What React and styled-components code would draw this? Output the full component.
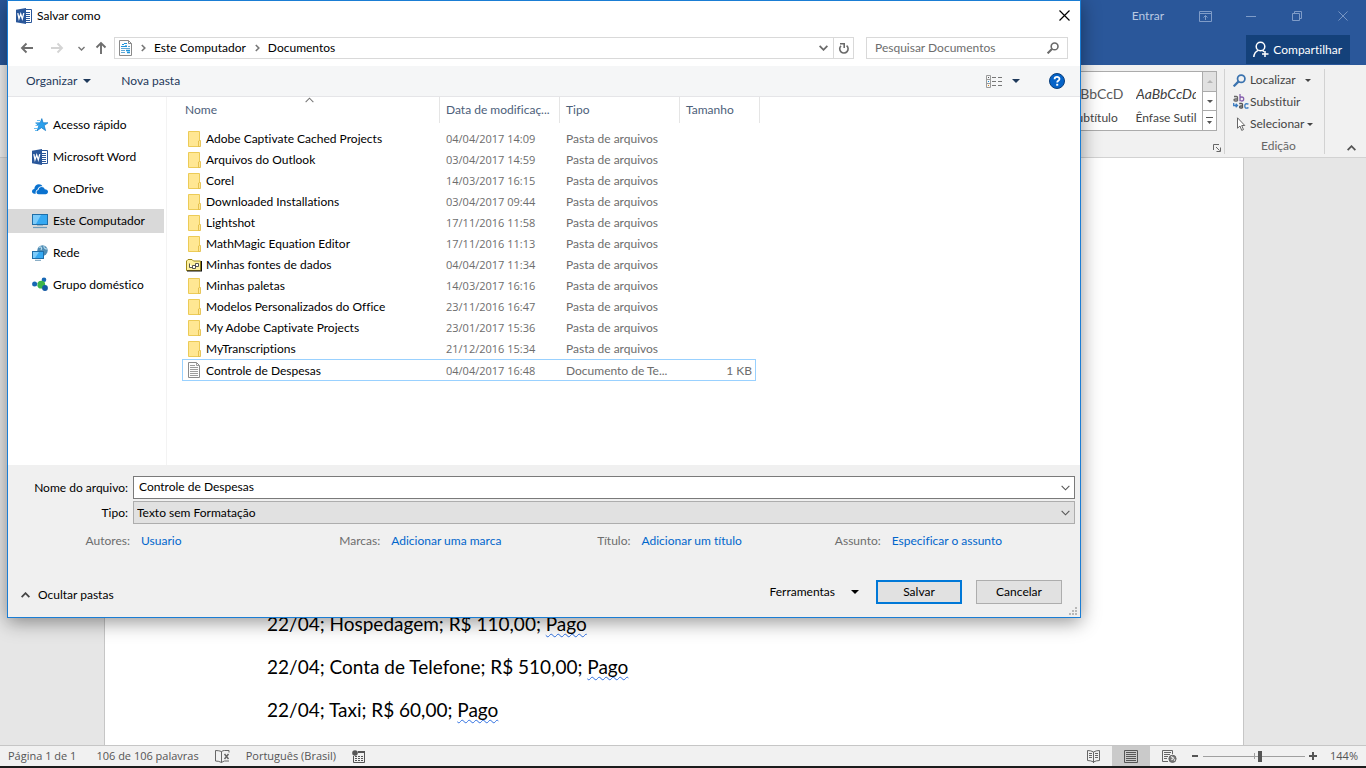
import React from 'react';
import styled, { createGlobalStyle } from 'styled-components';

const UI = `Lato, "Open Sans", sans-serif`;
const NUM = `"Open Sans", "Noto Sans", sans-serif`;

const GlobalStyle = createGlobalStyle`
  *, *::before, *::after { box-sizing: border-box; }
  body { margin: 0; background: #e6e6e6; font: 12px/16px ${UI}; font-variant-ligatures: none; color: #000; }
  button, input, select { font: inherit; font-variant-ligatures: none; color: inherit; margin: 0; padding: 0; border: 0; background: none; border-radius: 0; }
  button { display: inline-flex; align-items: center; cursor: default; white-space: nowrap; }
  a { color: inherit; text-decoration: none; }
  svg { display: block; flex: none; }
`;

/* ---------- Word window ---------- */

const Window = styled.div`
  position: relative;
  display: flex;
  flex-direction: column;
  min-height: 100vh;
  overflow: hidden;
`;

const TitleBar = styled.header`
  display: flex;
  flex-direction: column;
  align-items: flex-end;
  gap: 3px;
  height: 65px;
  background: #2a579a;
  color: #fff;
`;

const WindowControls = styled.div`
  display: flex;
  align-items: center;
  height: 32px;
`;

const SignIn = styled.button`
  padding: 0 18px;
  color: #b9c9e2;
`;

const ControlButton = styled.button`
  justify-content: center;
  width: 46px;
  height: 32px;
  color: #7f9cc8;
`;

const ShareButton = styled.button`
  gap: 4px;
  height: 29px;
  margin-right: 16px;
  padding: 0 8px 0 7px;
  background: #14417a;
`;

const Ribbon = styled.div`
  display: flex;
  justify-content: flex-end;
  height: 93px;
  padding: 4px 10px 3px 0;
  background: #f1f1f1;
  border-bottom: 1px solid #d2d2d2;
  color: #444;
`;

const StylesGroup = styled.section`
  display: flex;
  flex-direction: column;
  align-items: flex-end;
  justify-content: space-between;
  width: 260px;
  padding: 2px 3px 0 0;
`;

const Gallery = styled.div`
  display: flex;
  height: 60px;
  margin-right: 4px;
  border: 1px solid #ababab;
  background: #fff;
`;

const StyleItem = styled.button`
  flex-direction: column;
  justify-content: space-between;
  width: 72px;
  height: 58px;
  padding: 14px 4px 4px;
  color: #444;
`;

const StyleSample = styled.span`
  width: 60px;
  overflow: hidden;
  font: ${(p) => (p.$emphasis ? 'italic 14px/16px' : '14px/16px')} ${UI};
  color: ${(p) => (p.$emphasis ? '#404040' : '#5a5a5a')};
  text-align: left;
`;

const GallerySpinner = styled.div`
  display: grid;
  grid-template-rows: 20px 19px 19px;
  width: 14px;
  border-left: 1px solid #ababab;
`;

const SpinnerButton = styled.button`
  justify-content: center;
  border-bottom: ${(p) => (p.$last ? '0' : '1px solid #ababab')};
  background: ${(p) => (p.$muted ? '#e1e1e1' : '#fff')};
  color: ${(p) => (p.$muted ? '#b5b5b5' : '#555')};
`;

const Launcher = styled.button`
  width: 8px;
  height: 12px;
`;

const EditingGroup = styled.section`
  display: flex;
  flex-direction: column;
  align-items: flex-start;
  width: 101px;
  padding-left: 8px;
  border: solid #d2d2d2;
  border-width: 0 1px;
`;

const RibbonButton = styled.button`
  gap: ${(p) => p.$gap || 3}px;
  height: 23px;
`;

const RibbonIcon = styled.span`
  display: flex;
  width: 14px;
  margin-right: ${(p) => p.$pull || 0}px;
`;

const GroupLabel = styled.div`
  align-self: center;
  margin-top: 3px;
  color: #666;
`;

const CollapseButton = styled.button`
  align-self: flex-end;
  justify-content: flex-end;
  width: 31px;
  height: 12px;
  color: #555;
`;

const Canvas = styled.main`
  display: flex;
  flex: 1;
  padding: 0 122px 0 104px;
  background: #e6e6e6;
`;

const Page = styled.article`
  display: flex;
  flex: 1;
  flex-direction: column;
  justify-content: flex-end;
  padding: 0 162px 14px;
  border: solid #c6c6c6;
  border-width: 0 1px;
  background: #fff;
`;

const Paragraph = styled.p`
  margin: 0;
  font: 19px/43px ${UI};
  white-space: nowrap;
`;

const Flagged = styled.span`
  text-decoration: underline wavy #2f6fe0 1px;
  text-underline-offset: 2px;
  text-decoration-skip-ink: none;
`;

const StatusBar = styled.footer`
  display: flex;
  align-items: center;
  justify-content: space-between;
  height: 23px;
  padding: 0 8px;
  border-top: 1px solid #c6c6c6;
  border-bottom: 2px solid #1c1c1c;
  background: #f1f1f1;
  color: #555;
  font: 11px/16px ${NUM};
`;

const StatusGroup = styled.div`
  display: flex;
  align-items: center;
  gap: ${(p) => p.$gap || 0}px;
`;

const ZoomLevel = styled.span`
  margin-left: 10px;
`;

const ViewButton = styled.button`
  justify-content: center;
  width: 38px;
  height: 20px;
  background: ${(p) => (p.$active ? '#cacaca' : 'none')};
`;

const ZoomSlider = styled.input.attrs({ type: 'range' })`
  appearance: none;
  width: 102px;
  height: 16px;
  background: linear-gradient(#a0a0a0, #a0a0a0) 51px 50% / 1px 6px no-repeat,
    linear-gradient(#a0a0a0, #a0a0a0) 0 50% / 100% 1px no-repeat;
  &::-webkit-slider-thumb { appearance: none; width: 4px; height: 11px; background: #555; }
`;

/* ---------- Save dialog ---------- */

const Dialog = styled.div`
  position: absolute;
  top: 0;
  left: 7px;
  right: 285px;
  display: flex;
  flex-direction: column;
  border: 1px solid #1a7dd4;
  background: #fff;
  box-shadow: 0 4px 18px rgba(0, 0, 0, 0.42);
`;

const DialogTitle = styled.div`
  display: flex;
  align-items: center;
  gap: 5px;
  height: 29px;
  padding: 0 10px 0 8px;
`;

const DialogName = styled.h1`
  flex: 1;
  margin: 0;
  font: inherit;
`;

const NavBar = styled.div`
  display: flex;
  align-items: center;
  height: 36px;
  padding: 0 12px 0 4px;
`;

const NavButton = styled.button`
  justify-content: center;
  width: ${(p) => p.$w}px;
  height: 20px;
`;

const AddressBar = styled.div`
  display: flex;
  flex: 1;
  align-items: center;
  height: 22px;
  margin: 0 12px 0 2px;
  padding-left: 4px;
  border: 1px solid #d9d9d9;
`;

const Crumb = styled.button`
  padding: 0 8px 0 9px;
`;

const AddressTools = styled.div`
  display: flex;
  margin-left: auto;
  align-self: stretch;
`;

const AddressButton = styled.button`
  justify-content: center;
  width: 20px;
  border-left: ${(p) => (p.$divided ? '1px solid #d9d9d9' : '0')};
`;

const SearchBox = styled.label`
  display: flex;
  align-items: center;
  width: 202px;
  height: 22px;
  padding: 0 8px;
  border: 1px solid #d9d9d9;
`;

const SearchInput = styled.input`
  flex: 1;
  min-width: 0;
  outline: 0;
  &::placeholder { color: #6d6d6d; opacity: 1; }
`;

const Toolbar = styled.div`
  display: flex;
  align-items: center;
  height: 31px;
  padding: 0 15px 0 18px;
  border-bottom: 1px solid #e5e5e8;
  background: #f5f6f7;
  color: #1e395b;
`;

const ToolButton = styled.button`
  gap: 6px;
  margin-right: 30px;
`;

const ViewTools = styled.div`
  display: flex;
  align-items: center;
  gap: 9px;
  margin-left: auto;
`;

const HelpButton = styled.button`
  margin-left: 20px;
`;

const Body = styled.div`
  display: flex;
  height: 368px;
`;

const Sidebar = styled.nav`
  display: flex;
  flex: none;
  flex-direction: column;
  gap: 8px;
  width: 159px;
  padding: 16px 2px 0 0;
  border-right: 1px solid #f3f3f3;
`;

const Place = styled.a`
  display: flex;
  align-items: center;
  gap: 5px;
  height: 24px;
  padding-left: 24px;
  background: ${(p) => (p.$selected ? '#d9d9d9' : 'none')};
`;

const Files = styled.div`
  flex: 1;
  padding-left: 15px;
`;

const FileTable = styled.table`
  width: 574px;
  table-layout: fixed;
  border-collapse: separate;
  border-spacing: 0;
  color: #6d6d6d;
`;

const HeadCell = styled.th`
  position: relative;
  width: ${(p) => p.$w}px;
  height: 26px;
  padding: 0 0 0 ${(p) => (p.$first ? 3 : 6)}px;
  color: #4c607a;
  font-weight: 400;
  text-align: left;
  white-space: nowrap;
  &::after {
    content: '';
    position: absolute;
    top: 0;
    right: ${(p) => (p.$outer ? -4 : 0)}px;
    width: 1px;
    height: 26px;
    background: #e5e5e5;
  }
`;

const SortMark = styled.span`
  position: absolute;
  top: 0;
  left: 123px;
`;

const Spacer = styled.tr`
  height: 5px;
`;

const FileRow = styled.tr`
  height: ${(p) => (p.$selected ? 22 : 21)}px;
  td { border: solid ${(p) => (p.$selected ? '#99d1ff' : 'transparent')}; border-width: 1px 0; }
  td:first-child { border-left-width: 1px; }
  td:last-child { border-right-width: 1px; }
`;

const Cell = styled.td`
  padding: 0 3px 0 6px;
  overflow: hidden;
  line-height: 19px;
  text-align: ${(p) => (p.$right ? 'right' : 'left')};
  text-overflow: ellipsis;
  white-space: nowrap;
`;

const DateCell = styled(Cell)`
  font: 11px/19px ${NUM};
`;

const NameCell = styled(Cell)`
  padding-left: 3px;
  color: #000;
`;

const FileName = styled.span`
  display: flex;
  align-items: center;
  gap: 4px;
`;

const Footer = styled.div`
  position: relative;
  display: flex;
  flex-direction: column;
  height: 152px;
  padding-top: 11px;
  background: #f0f0f0;
`;

const FieldRow = styled.div`
  display: flex;
  align-items: center;
  gap: 5px;
  height: 23px;
  margin-bottom: 2px;
  padding-right: 5px;
`;

const FieldLabel = styled.label`
  width: 120px;
  text-align: right;
`;

const Combo = styled.div`
  position: relative;
  display: flex;
  flex: 1;
  align-items: center;
  height: 23px;
  border: 1px solid ${(p) => (p.$muted ? '#adadad' : '#7a7a7a')};
  background: ${(p) => (p.$muted ? '#e1e1e1' : '#fff')};
`;

const ComboInput = styled.input`
  flex: 1;
  height: 21px;
  padding: 0 0 2px 5px;
  outline: 0;
`;

const ComboSelect = styled.select`
  appearance: none;
  flex: 1;
  height: 21px;
  padding-left: 3px;
  outline: 0;
`;

const ComboArrow = styled.span`
  position: absolute;
  right: 4px;
  pointer-events: none;
`;

const Metadata = styled.dl`
  display: grid;
  grid-template-columns: repeat(4, 1fr);
  margin: 7px 71px 0 0;
`;

const MetaItem = styled.div`
  display: flex;
  gap: 11px;
`;

const MetaLabel = styled.dt`
  width: 122px;
  color: #6d6d6d;
  text-align: right;
`;

const MetaValue = styled.dd`
  margin: 0;
  color: #0066cc;
  white-space: nowrap;
`;

const Actions = styled.div`
  display: flex;
  align-items: center;
  justify-content: space-between;
  margin-top: 31px;
  padding: 0 18px 0 13px;
`;

const FoldersButton = styled.button`
  gap: 8px;
  padding-top: 6px;
`;

const ActionGroup = styled.div`
  display: flex;
  align-items: center;
  gap: 14px;
`;

const ToolsButton = styled.button`
  gap: 16px;
  margin-right: 3px;
`;

const PushButton = styled.button`
  justify-content: center;
  width: 86px;
  height: 24px;
  border: ${(p) => (p.$primary ? '2px solid #0078d7' : '1px solid #adadad')};
  background: #e1e1e1;
`;

const Grip = styled.span`
  position: absolute;
  right: 3px;
  bottom: 2px;
`;

/* ---------- Icons ---------- */

const Arrow = ({ w = 8, h = 4, up }) => (
  <svg width={w} height={h} viewBox="0 0 8 4" fill="currentColor">
    <path d={up ? 'M0 4 4 0l4 4z' : 'M0 0h8L4 4z'} />
  </svg>
);

const Chevron = ({ w = 10, h = 6, color = '#555', sw = 1.2, up }) => (
  <svg width={w} height={h} viewBox="0 0 10 6" fill="none" stroke={color} strokeWidth={sw}>
    <path d={up ? 'M.7 5.3 5 1l4.3 4.3' : 'M.7.7 5 5 9.3.7'} />
  </svg>
);

const CrumbMark = () => (
  <svg width="5" height="8" viewBox="0 0 5 8" fill="none" stroke="#777" strokeWidth="1.6">
    <path d="M.8 1 3.8 4l-3 3" />
  </svg>
);

const WordIcon = () => (
  <svg width="16" height="16" viewBox="0 0 16 16">
    <path d="M9 1.5h6.5v13H9z" fill="#fff" stroke="#2a579a" />
    <path d="M10 4.5h4M10 6.5h4M10 8.5h4M10 10.5h4M10 12.5h4" stroke="#2a579a" />
    <path d="M0 1.8 10 0v16L0 14.2z" fill="#2a579a" />
    <path d="m1.8 5.2 1.2 5.5L4.7 6l1.6 4.7 1.5-5.5" fill="none" stroke="#fff" strokeWidth="1.3" />
  </svg>
);

const NavArrow = ({ color, d }) => (
  <svg width="14" height="14" viewBox="0 0 14 14" fill="none" stroke={color} strokeWidth="1.9">
    <path d={d} />
  </svg>
);

const DocumentsIcon = () => (
  <svg width="13" height="16" viewBox="0 0 13 16" fill="none">
    <path d="M.5.5h9l3 3v12H.5z" fill="#fdfdfd" stroke="#8a8a8a" />
    <path d="M9.5.5v3h3" stroke="#8a8a8a" />
    <path d="M5 3.500h3M3 4.500h2M2 6.500h6M7 5v2" stroke="#1a93dc" strokeWidth="1.2" />
    <path d="M2 8.500h9M2 10.500h4M2 12.500h4M9 6.500h2" stroke="#5fa8d6" />
    <path d="M7 10.500h4M8 12.500h3" stroke="#1a93dc" strokeWidth="1.4" />
  </svg>
);

const RefreshIcon = () => (
  <svg width="12" height="13" viewBox="0 0 12 13" fill="none" stroke="#6a6a6a" strokeWidth="1.6">
    <path d="M8.600 3.600A4.200 4.200 0 1 1 3 3.800" />
    <path d="M2 1.800h4.200V6" />
  </svg>
);

const SearchIcon = ({ size = 12, color = '#6a6a6a', sw = 1.6 }) => (
  <svg width={size} height={size} viewBox="0 0 12 12" fill="none" stroke={color} strokeWidth={sw}>
    <circle cx="7.6" cy="4.4" r="3.4" />
    <path d="M5.2 6.8.6 11.4" strokeWidth={sw * 1.3} />
  </svg>
);

const DetailsIcon = () => (
  <svg width="17" height="13" viewBox="0 0 17 13" fill="none">
    <path d="M.5.5h4v12h-4zM.5 4.5h4M.5 8.5h4" stroke="#9a9a9a" />
    <path d="M2 2.5h1" stroke="#555" />
    <path d="M2 6.5h1" stroke="#1a93dc" />
    <path d="M2 10.5h1" stroke="#d98a1c" />
    <path d="M6 2.5h4M12 2.5h4M6 6.5h4M12 6.5h4M6 10.5h4M12 10.5h4" stroke="#777" />
  </svg>
);

const HelpIcon = () => (
  <svg width="16" height="16" viewBox="0 0 16 16" fill="none">
    <circle cx="8" cy="8" r="7.5" fill="#0563c8" stroke="#0a3f7c" />
    <path d="M5.6 6.2c0-3 4.9-3 4.9-.2 0 1.8-2.3 1.8-2.3 3.4" stroke="#fff" strokeWidth="1.8" />
    <path d="M7.2 10.8h2v1.9h-2z" fill="#fff" />
  </svg>
);

const StarIcon = () => (
  <svg width="16" height="16" viewBox="0 0 16 16">
    <path d="m9.8 1.6 1.3 4.2H16l-3.8 2.8 1.4 5-4.2-2.9L5 13.8l1.8-4.9L3.8 6l4.4-.2z" fill="#2ba0ec" stroke="#1377c4" strokeWidth=".7" />
    <path d="M5 3.5h3M3.5 6h3M3.5 8.5h3M2 11.5h4M3 13.5h2" stroke="#68bdf2" />
  </svg>
);

const CloudIcon = () => (
  <svg width="16" height="16" viewBox="0 0 16 16" fill="#0a72cf">
    <path d="M3.7 12.7H2.6C.9 12.7 0 11.6 0 10.4c0-1.3 1-2.3 2.3-2.4C2.4 5 4.5 3.3 6.9 3.3c1.7 0 3 .8 3.7 2.1-2.7-.6-4.6.9-5 3.1-1.500.5-2.3 2.3-1.900 4.200z" />
    <path d="M6.6 13.2c-1.3 0-2.1-.9-2.1-2s.9-2 2-2.1c.1-1.8 1.5-3 3.2-3 1.5 0 2.6.8 3 2.1 2 0 3.3 1 3.3 2.6s-1.1 2.4-2.4 2.400z" />
  </svg>
);

const Screen = ({ x = 0, y = 0, w = 16, h = 11 }) => (
  <g>
    <rect x={x + 0.5} y={y + 0.5} width={w - 1} height={h - 1} fill="#36a9f2" stroke="#1f6ea8" />
    <path d={`M${x + 1} ${y + 1}h${w / 2}L${x + w / 4} ${y + h - 1}H${x + 1}z`} fill="#7ccbfa" />
  </g>
);

const ComputerIcon = () => (
  <svg width="16" height="16" viewBox="0 0 16 16">
    <Screen y={1} />
    <path d="M5 12.5h6" stroke="#9fb6c6" />
    <path d="M1 14.5h14" stroke="#6f9cba" strokeWidth="1.2" />
  </svg>
);

const NetworkIcon = () => (
  <svg width="16" height="16" viewBox="0 0 16 16">
    <circle cx="10.5" cy="5.5" r="5.2" fill="#4f8cb4" />
    <path d="M7 2.500c2-1.500 3.500.5 2 2.500M12 1c-.5 2 1.500 3 3 3" stroke="#b9dcee" strokeWidth="1.2" fill="none" />
    <Screen y={6} w={12} h={8} />
    <path d="M3 15.3h6" stroke="#6f9cba" />
  </svg>
);

const HomegroupIcon = () => (
  <svg width="16" height="16" viewBox="0 0 16 16">
    <path d="M3 7.5 12 3v9z" fill="none" stroke="#a8cbe4" />
    <circle cx="2.6" cy="7" r="2.5" fill="#1767b4" />
    <circle cx="12" cy="2.8" r="2.3" fill="#1767b4" />
    <circle cx="9.3" cy="7.7" r="3.9" fill="#3cb54a" />
    <circle cx="13" cy="11" r="2.9" fill="#1459a3" />
  </svg>
);

const FolderIcon = () => (
  <svg width="16" height="16" viewBox="0 0 16 16">
    <path d="M2.5.5h11v15h-11z" fill="#ffe793" stroke="#eccb57" />
    <path d="M12.5 10v5.500h2V9.500h-1z" fill="#ffe793" stroke="#dfb93f" strokeWidth=".8" />
  </svg>
);

const DataFolderIcon = () => (
  <svg width="16" height="16" viewBox="0 0 16 16">
    <path d="M.5 13.5V4l1.500-1.500h4L7.500 4h7v9.500z" fill="#fdf0a0" stroke="#a08a14" />
    <path d="M1 14h14.5V4" fill="none" stroke="#111" strokeWidth="1.2" />
    <path d="M3.500 6.500v4h3M6.500 8.500h3v3h-3zM9.500 6.500h3v3h-3z" fill="#fff" stroke="#444" strokeWidth=".9" />
  </svg>
);

const TextFileIcon = () => (
  <svg width="16" height="16" viewBox="0 0 16 16">
    <path d="M2.5.5h8l3 3v12h-11z" fill="#fdfdfd" stroke="#8a8a8a" />
    <path d="M10.5.5v3h3M4 3.5h5M4 5.5h8M4 7.5h8M4 9.5h8M4 11.5h8M4 13.5h8" fill="none" stroke="#9c9c9c" />
  </svg>
);

const CloseIcon = ({ size = 11, sw = 1.2 }) => (
  <svg width={size} height={size} viewBox="0 0 11 11" stroke="currentColor" strokeWidth={sw}>
    <path d="m.5.5 10 10M10.5.5l-10 10" />
  </svg>
);

const RibbonOptionsIcon = () => (
  <svg width="13" height="11" viewBox="0 0 13 11" fill="none" stroke="currentColor">
    <path d="M.5.5h12v10H.5zM.5 2.5h12M6.5 9V4.5M4.5 6.5l2-2 2 2" />
  </svg>
);

const PersonIcon = () => (
  <svg width="16" height="17" viewBox="0 0 16 17" fill="none" stroke="#fff" strokeWidth="1.5">
    <circle cx="7.5" cy="5.5" r="4.3" />
    <path d="M.8 16c.3-3.5 2-5.500 4.400-6.600M9.500 9.400l1.500 1.200M12 10v6M9 13h6.500" />
  </svg>
);

const ReplaceIcon = () => (
  <svg width="16" height="16" viewBox="0 0 16 16" fill="none" strokeWidth="1.3">
    <path d="M1 2.5h2.5q1 0 1 1V7M4.5 5H2.300Q1 5 1 6t1.300 1H4.500" stroke="#666" />
    <path d="M7 0v7.300M7 4.500q0-1.500 1.800-1.500 1.900 0 1.900 2t-1.900 2Q7 7 7 5.500" stroke="#8661ae" />
    <path d="M6.200 9.500h2.300q1 0 1 1V14M9.500 12H7.800q-1.300 0-1.300 1t1.300 1H9.500" stroke="#555" />
    <path d="M15.500 10.200q-3.700-1.500-3.700 1.800t3.700 1.700" stroke="#3b7bbf" />
    <path d="M.7 9v2.500h3.500M2.700 9.800l1.800 1.700-1.800 1.800" stroke="#3b7bbf" />
  </svg>
);

const CursorIcon = () => (
  <svg width="14" height="14" viewBox="0 0 14 14" fill="#fff" stroke="#666">
    <path d="M4.5.8v10.400L7 9l1.700 4.400 1.800-.8L8.700 8.500h3.100z" />
  </svg>
);

const LauncherIcon = () => (
  <svg width="8" height="8" viewBox="0 0 8 8" fill="none" stroke="#666">
    <path d="M.5 6V.5H6M3 3l3.5 3.5M7.5 3.5v4h-4" />
  </svg>
);

const ProofIcon = () => (
  <svg width="15" height="13" viewBox="0 0 15 13" fill="none" stroke="#666">
    <path d="M6.500 12.500v-11M6.500 1.500q-2.500-1-6-1v10.500q3.500 0 6 1.500 1.500-1 3-1.500h4.500M6.500 1.500q1.500-1 3-1h4.500v2" />
    <path d="m9.500 4 4 5M13.500 4l-4 5" strokeWidth="1.500" />
  </svg>
);

const MacroIcon = () => (
  <svg width="14" height="13" viewBox="0 0 14 13" fill="none" stroke="#555">
    <path d="M1.5 6v6.500h11V2" />
    <path d="M6 2h7" strokeWidth="2" />
    <path d="M3 6.500h2M6 6.500h2M9 6.500h2M3 8.500h2M6 8.500h2M9 8.500h2M3 10.500h2M6 10.500h2M9 10.500h2" />
    <circle cx="3" cy="3" r="2.8" fill="#555" stroke="none" />
  </svg>
);

const ReadIcon = () => (
  <svg width="13" height="13" viewBox="0 0 13 13" fill="none" stroke="#666">
    <path d="M6.5 2Q4 .5.5.5v10q3.5 0 6 1.5 2.5-1.5 6-1.5V.5Q9 .5 6.5 2zV13" />
    <path d="M2 3.5h3M2 5.5h3M2 7.5h3M8 3.5h3M8 5.5h3M8 7.5h3" />
  </svg>
);

const PrintIcon = () => (
  <svg width="14" height="13" viewBox="0 0 14 13" fill="none" stroke="#555">
    <path d="M.5.5h13v12H.5zM2 2.5h10M2 4.5h10M2 6.5h10M2 8.5h10M2 10.5h10" />
  </svg>
);

const WebIcon = () => (
  <svg width="15" height="13" viewBox="0 0 15 13" fill="none" stroke="#666">
    <path d="M6 11.5H.5V.5h10V4M2 2.5h7M2 4.5h6M2 6.5h4M2 8.5h3" />
    <circle cx="10.5" cy="8.8" r="3.6" fill="#777" />
    <path d="M9 6.500 11.500 8 9.500 10M12 10.500l1-1" stroke="#eee" strokeWidth="1.2" />
  </svg>
);

const ZoomMark = ({ plus }) => (
  <svg width="8" height="8" viewBox="0 0 8 8" stroke="#555" strokeWidth="2">
    <path d={plus ? 'M0 4h8M4 0v8' : 'M1 4h6'} />
  </svg>
);

const GripIcon = () => (
  <svg width="8" height="8" viewBox="0 0 8 8" fill="#b8b8b8">
    <path d="M6 0h2v2H6zM3 3h2v2H3zM6 3h2v2H6zM0 6h2v2H0zM3 6h2v2H3zM6 6h2v2H6z" />
  </svg>
);

/* ---------- Data ---------- */

const places = [
  ['Acesso rápido', StarIcon],
  ['Microsoft Word', WordIcon],
  ['OneDrive', CloudIcon],
  ['Este Computador', ComputerIcon],
  ['Rede', NetworkIcon],
  ['Grupo doméstico', HomegroupIcon],
];

const FOLDER = 'Pasta de arquivos';
const files = [
  ['Adobe Captivate Cached Projects', '04/04/2017 14:09', FOLDER, '', FolderIcon],
  ['Arquivos do Outlook', '03/04/2017 14:59', FOLDER, '', FolderIcon],
  ['Corel', '14/03/2017 16:15', FOLDER, '', FolderIcon],
  ['Downloaded Installations', '03/04/2017 09:44', FOLDER, '', FolderIcon],
  ['Lightshot', '17/11/2016 11:58', FOLDER, '', FolderIcon],
  ['MathMagic Equation Editor', '17/11/2016 11:13', FOLDER, '', FolderIcon],
  ['Minhas fontes de dados', '04/04/2017 11:34', FOLDER, '', DataFolderIcon],
  ['Minhas paletas', '14/03/2017 16:16', FOLDER, '', FolderIcon],
  ['Modelos Personalizados do Office', '23/11/2016 16:47', FOLDER, '', FolderIcon],
  ['My Adobe Captivate Projects', '23/01/2017 15:36', FOLDER, '', FolderIcon],
  ['MyTranscriptions', '21/12/2016 15:34', FOLDER, '', FolderIcon],
  ['Controle de Despesas', '04/04/2017 16:48', 'Documento de Te...', '1 KB', TextFileIcon],
];

const metadata = [
  ['Autores:', 'Usuario'],
  ['Marcas:', 'Adicionar uma marca'],
  ['Título:', 'Adicionar um título'],
  ['Assunto:', 'Especificar o assunto'],
];

const paragraphs = [
  '22/04; Hospedagem; R$ 110,00; ',
  '22/04; Conta de Telefone; R$ 510,00; ',
  '22/04; Taxi; R$ 60,00; ',
];

/* ---------- Views ---------- */

const SaveDialog = () => (
  <Dialog role="dialog" aria-labelledby="dialog-name">
    <DialogTitle>
      <WordIcon />
      <DialogName id="dialog-name">Salvar como</DialogName>
      <button aria-label="Fechar"><CloseIcon /></button>
    </DialogTitle>
    <NavBar>
      <NavButton $w={30} aria-label="Voltar"><NavArrow color="#6e6e6e" d="M13 7H2M6.5 2.500 2 7l4.500 4.500" /></NavButton>
      <NavButton $w={30} aria-label="Avançar"><NavArrow color="#d4d4d4" d="M1 7h11M7.500 2.500 12 7l-4.500 4.500" /></NavButton>
      <NavButton $w={18} aria-label="Locais recentes"><Chevron w={7} h={5} color="#777" sw={2} /></NavButton>
      <NavButton $w={22} aria-label="Acima"><NavArrow color="#6e6e6e" d="M7 13V2M2.500 6.500 7 2l4.500 4.500" /></NavButton>
      <AddressBar>
        <DocumentsIcon />
        <Crumb aria-label="Raiz"><CrumbMark /></Crumb>
        <button>Este Computador</button>
        <Crumb aria-label="Subpastas"><CrumbMark /></Crumb>
        <button>Documentos</button>
        <AddressTools>
          <AddressButton aria-label="Locais anteriores"><Chevron w={9} h={6} color="#6a6a6a" sw={2} /></AddressButton>
          <AddressButton $divided aria-label="Atualizar"><RefreshIcon /></AddressButton>
        </AddressTools>
      </AddressBar>
      <SearchBox>
        <SearchInput placeholder="Pesquisar Documentos" aria-label="Pesquisar Documentos" />
        <SearchIcon />
      </SearchBox>
    </NavBar>
    <Toolbar>
      <ToolButton>Organizar <Arrow /></ToolButton>
      <ToolButton>Nova pasta</ToolButton>
      <ViewTools>
        <button aria-label="Exibição"><DetailsIcon /></button>
        <button aria-label="Mais opções"><Arrow /></button>
        <HelpButton aria-label="Ajuda"><HelpIcon /></HelpButton>
      </ViewTools>
    </Toolbar>
    <Body>
      <Sidebar>
        {places.map(([label, Icon]) => (
          <Place key={label} href="#" $selected={label === 'Este Computador'}>
            <Icon />
            {label}
          </Place>
        ))}
      </Sidebar>
      <Files>
        <FileTable>
          <thead>
            <tr>
              <HeadCell $w={258} $first>
                Nome
                <SortMark><Chevron up w={9} h={6} color="#777" /></SortMark>
              </HeadCell>
              <HeadCell $w={120}>Data de modificaç...</HeadCell>
              <HeadCell $w={120}>Tipo</HeadCell>
              <HeadCell $w={76} $outer>Tamanho</HeadCell>
            </tr>
          </thead>
          <tbody>
            <Spacer />
            {files.map(([name, date, type, size, Icon]) => (
              <FileRow key={name} $selected={size !== ''}>
                <NameCell><FileName><Icon />{name}</FileName></NameCell>
                <DateCell>{date}</DateCell>
                <Cell>{type}</Cell>
                <Cell $right>{size}</Cell>
              </FileRow>
            ))}
          </tbody>
        </FileTable>
      </Files>
    </Body>
    <Footer>
      <FieldRow>
        <FieldLabel htmlFor="file-name">Nome do arquivo:</FieldLabel>
        <Combo>
          <ComboInput id="file-name" defaultValue="Controle de Despesas" />
          <ComboArrow><Chevron w={9} /></ComboArrow>
        </Combo>
      </FieldRow>
      <FieldRow>
        <FieldLabel htmlFor="file-type">Tipo:</FieldLabel>
        <Combo $muted>
          <ComboSelect id="file-type"><option>Texto sem Formatação</option></ComboSelect>
          <ComboArrow><Chevron w={9} /></ComboArrow>
        </Combo>
      </FieldRow>
      <Metadata>
        {metadata.map(([label, value]) => (
          <MetaItem key={label}>
            <MetaLabel>{label}</MetaLabel>
            <MetaValue><a href="#">{value}</a></MetaValue>
          </MetaItem>
        ))}
      </Metadata>
      <Actions>
        <FoldersButton><Chevron up w={9} color="#444" sw={2} />Ocultar pastas</FoldersButton>
        <ActionGroup>
          <ToolsButton>Ferramentas <Arrow /></ToolsButton>
          <PushButton $primary>Salvar</PushButton>
          <PushButton>Cancelar</PushButton>
        </ActionGroup>
      </Actions>
      <Grip><GripIcon /></Grip>
    </Footer>
  </Dialog>
);

export default function App() {
  return (
    <Window>
      <GlobalStyle />
      <TitleBar>
        <WindowControls>
          <SignIn>Entrar</SignIn>
          <ControlButton aria-label="Opções da Faixa de Opções"><RibbonOptionsIcon /></ControlButton>
          <ControlButton aria-label="Minimizar">
            <svg width="10" height="1"><path d="M0 .5h10" stroke="currentColor" /></svg>
          </ControlButton>
          <ControlButton aria-label="Restaurar">
            <svg width="10" height="10" viewBox="0 0 10 10" fill="none" stroke="currentColor">
              <path d="M.5 2.5h7v7h-7zM2.5 2.500v-2h7v7h-2" />
            </svg>
          </ControlButton>
          <ControlButton aria-label="Fechar Word"><CloseIcon size={10} sw={1} /></ControlButton>
        </WindowControls>
        <ShareButton><PersonIcon />Compartilhar</ShareButton>
      </TitleBar>
      <Ribbon>
        <StylesGroup>
          <Gallery>
            <StyleItem><StyleSample>AaBbCcD</StyleSample>Subtítulo</StyleItem>
            <StyleItem><StyleSample $emphasis>AaBbCcDd</StyleSample>Ênfase Sutil</StyleItem>
            <GallerySpinner>
              <SpinnerButton $muted aria-label="Linha anterior"><Arrow w={6} h={3} up /></SpinnerButton>
              <SpinnerButton aria-label="Próxima linha"><Arrow w={6} h={3} /></SpinnerButton>
              <SpinnerButton $last aria-label="Mais">
                <svg width="7" height="7" viewBox="0 0 7 7" fill="currentColor"><path d="M0 0h7v1H0zM1 4h5L3.5 7z" /></svg>
              </SpinnerButton>
            </GallerySpinner>
          </Gallery>
          <Launcher aria-label="Estilos"><LauncherIcon /></Launcher>
        </StylesGroup>
        <EditingGroup>
          <RibbonButton $gap={9}>
            <RibbonIcon $pull={-6}><SearchIcon size={13} color="#3b73af" /></RibbonIcon>Localizar <Arrow w={6} h={3} />
          </RibbonButton>
          <RibbonButton><RibbonIcon><ReplaceIcon /></RibbonIcon>Substituir</RibbonButton>
          <RibbonButton><RibbonIcon><CursorIcon /></RibbonIcon>Selecionar <Arrow w={6} h={3} /></RibbonButton>
          <GroupLabel>Edição</GroupLabel>
        </EditingGroup>
        <CollapseButton aria-label="Recolher"><Chevron up w={9} sw={2} /></CollapseButton>
      </Ribbon>
      <Canvas>
        <Page>
          {paragraphs.map((text) => (
            <Paragraph key={text}>{text}<Flagged>Pago</Flagged></Paragraph>
          ))}
        </Page>
      </Canvas>
      <StatusBar>
        <StatusGroup $gap={20}>
          <span>Página 1 de 1</span>
          <StatusGroup $gap={16}>
            <span>106 de 106 palavras</span>
            <ProofIcon />
            <span>Português (Brasil)</span>
            <MacroIcon />
          </StatusGroup>
        </StatusGroup>
        <StatusGroup $gap={3}>
          <StatusGroup>
            <ViewButton aria-label="Modo de leitura"><ReadIcon /></ViewButton>
            <ViewButton $active aria-label="Layout de impressão"><PrintIcon /></ViewButton>
            <ViewButton aria-label="Layout da Web"><WebIcon /></ViewButton>
          </StatusGroup>
          <StatusGroup $gap={4}>
            <button aria-label="Menos zoom"><ZoomMark /></button>
            <ZoomSlider aria-label="Zoom" min="10" max="278" defaultValue="160" />
            <button aria-label="Mais zoom"><ZoomMark plus /></button>
          </StatusGroup>
          <ZoomLevel>144%</ZoomLevel>
        </StatusGroup>
      </StatusBar>
      <SaveDialog />
    </Window>
  );
}
